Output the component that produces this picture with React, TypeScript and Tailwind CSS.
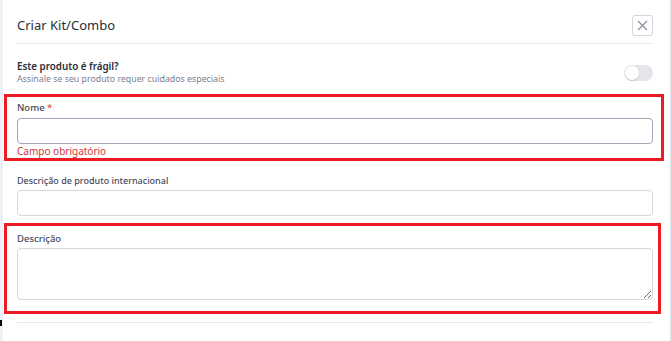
import React from "react";

const font = { fontFamily: '"Noto Sans", "Open Sans", Arial, sans-serif' };

function CloseButton() {
  return (
    <button
      type="button"
      aria-label="Fechar"
      className="w-[21px] h-[21px] flex items-center justify-center rounded-[3px] border border-[#d3d6de] bg-white text-[#8a8f9c]"
    >
      <svg width="11" height="11" viewBox="0 0 11 11" fill="none" stroke="currentColor" strokeWidth="1.2">
        <path d="M1 1 L10 10 M10 1 L1 10" />
      </svg>
    </button>
  );
}

function Toggle() {
  return (
    <div className="w-[29px] h-[16px] rounded-full bg-[#e4e6eb] flex items-center px-[1px]">
      <div className="w-[14px] h-[14px] rounded-full bg-white shadow-[0_1px_1px_rgba(0,0,0,0.15)]" />
    </div>
  );
}

export default function App() {
  return (
    <div className="relative flex w-full h-[341px] bg-[#eef2f6] pl-[3px] pr-[2px] overflow-hidden" style={font}>
      <div className="absolute left-0 top-[320px] w-[2px] h-[6px] bg-black" />
      <div className="flex-1 bg-white pl-[14px] pr-[16px]">
        {/* Header */}
        <div className="flex items-center justify-between pt-[15px] pb-[7px] border-b border-[#e4e6ea]">
          <h1 className="text-[13px] leading-[21px] text-[#2b2d38]">Criar Kit/Combo</h1>
          <CloseButton />
        </div>

        {/* Fragile */}
        <div className="flex items-center justify-between mt-[16px]">
          <div>
            <p className="text-[9.8px] leading-[14px] font-semibold text-[#2b2d38]">Este produto é frágil?</p>
            <p className="text-[8.8px] leading-[11px] text-[#7b8090]">Assinale se seu produto requer cuidados especiais</p>
          </div>
          <Toggle />
        </div>

        {/* Nome */}
        <div className="mt-[9px] -ml-[13px] -mr-[11px] border-[3px] border-[#ed1c24] pl-[10px] pr-[8px] pt-[4px]">
          <label className="block text-[9.5px] leading-[14px] font-medium text-[#454a59]">
            Nome <span className="text-[#e0474c]">*</span>
          </label>
          <input className="mt-[3px] block w-full h-[26px] rounded-[4px] border border-[#a3a8b8] bg-white outline-none" />
          <p className="text-[10px] leading-[14px] text-[#d4373c]">Campo obrigatório</p>
        </div>

        {/* Descrição internacional */}
        <label className="block mt-[13px] text-[9px] leading-[14px] font-medium text-[#454a59]">
          Descrição de produto internacional
        </label>
        <input className="mt-[2px] block w-full h-[26px] rounded-[4px] border border-[#d3d6de] bg-white outline-none" />

        {/* Descrição */}
        <div className="mt-[7px] -ml-[13px] -mr-[8px] border-[3px] border-[#ed1c24] pl-[10px] pr-[5px] pt-[6px] pb-[11px]">
          <label className="block text-[9.5px] leading-[14px] font-medium text-[#454a59]">Descrição</label>
          <textarea className="mt-[2px] block w-full h-[52px] rounded-[4px] border border-[#d3d6de] bg-white outline-none" />
        </div>

        <div className="mt-[8px] border-t border-[#e4e6ea]" />
      </div>
    </div>
  );
}
